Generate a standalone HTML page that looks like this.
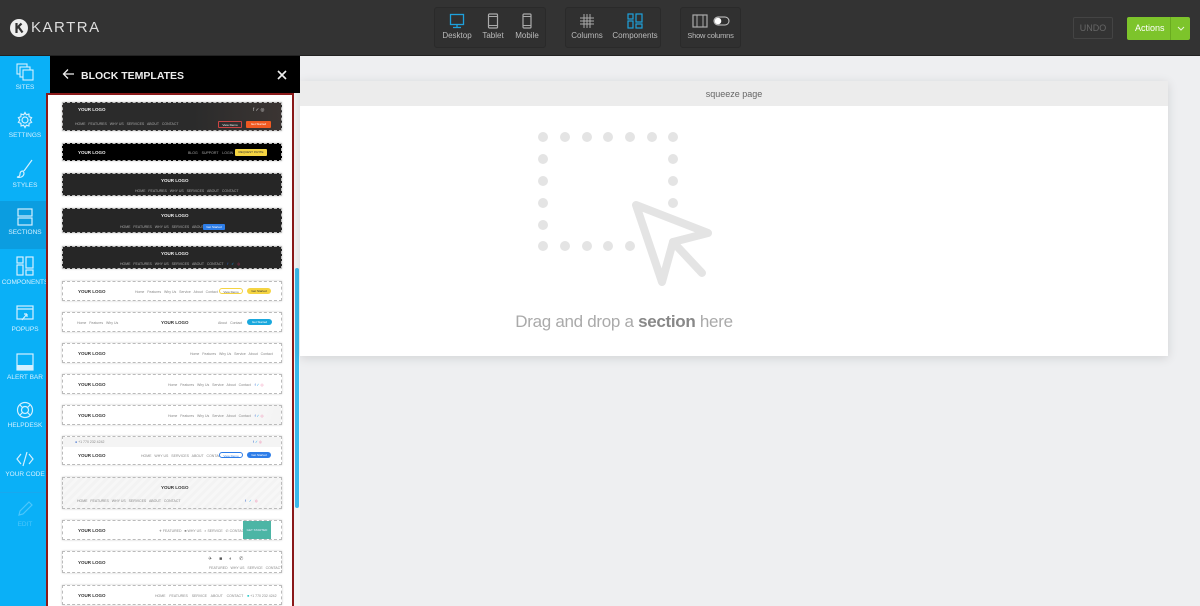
<!DOCTYPE html>
<html><head><meta charset="utf-8"><style>
*{box-sizing:border-box;margin:0;padding:0}
body{width:1200px;height:606px;overflow:hidden;background:#eeeff1;font-family:"Liberation Sans",sans-serif;position:relative}
.a{position:absolute}
#top{left:0;top:0;width:1200px;height:56px;background:#333;border-bottom:1px solid #222}
.grp{position:absolute;top:7px;height:41px;border:1px solid #2a2a2a;border-radius:3px;background:#303030}
.ti{position:absolute;top:0;font-size:8px;color:#bbb;text-align:center;white-space:nowrap}
.ti svg{display:block;margin:5px auto 2px}
#side{left:0;top:56px;width:50px;height:550px;background:#0ab0f7}
.si{position:absolute;left:0;width:50px;height:48px;text-align:center;color:#d4f0ff;font-size:6.5px}
.si svg{display:block;margin:7px auto 3px}
#ph{left:50px;top:56px;width:250px;height:37px;background:#000;color:#eee;font-size:10.5px;font-weight:bold}
#list{left:46px;top:93px;width:248px;height:513px;background:#fff;border:2px solid #8b1a1a;border-bottom:none;overflow:hidden}
.t{position:absolute;left:14px;width:220px;border:1px dashed #bbb;font-size:3.5px;color:#888;box-shadow:0 0 2px #ccc}
.t b{position:absolute;font-size:4.5px;font-weight:bold}
.t i{position:absolute;font-style:normal;white-space:nowrap}
.d{background:#262626;color:#aaa}.d b{color:#eee}
.w{background:#fff}.w b{color:#333}
.btn{position:absolute;height:6px;border-radius:3px;font-size:3px;line-height:6px;text-align:center;color:#fff}
</style></head><body>
<div id="top" class="a">
 <svg class="a" style="left:10px;top:19px" width="18" height="18" viewBox="0 0 18 18"><circle cx="9" cy="9" r="9" fill="#eee"/><path d="M6.5 4v10M6.5 9.5L11.5 4.5M8.5 8l4 5.5" stroke="#333" stroke-width="2.2" fill="none"/></svg>
 <div class="a" style="left:31px;top:19px;color:#ddd;font-size:15px;letter-spacing:1.5px">KARTRA</div>
 <div class="grp" style="left:434px;width:112px">
  <div class="ti" style="left:6px;width:32px;color:#bbb"><svg width="16" height="16" viewBox="0 0 16 16"><rect x="1.5" y="1.5" width="13" height="10" fill="none" stroke="#1ea1dc" stroke-width="1.3"/><path d="M8 11.5v3M4 14.5h8" stroke="#1ea1dc" stroke-width="1.3"/></svg>Desktop</div>
  <div class="ti" style="left:44px;width:28px"><svg width="12" height="16" viewBox="0 0 12 16"><rect x="1.5" y="1" width="9" height="14" rx="1" fill="none" stroke="#aaa" stroke-width="1.2"/><path d="M1.5 3.5h9M1.5 12.5h9" stroke="#aaa"/></svg>Tablet</div>
  <div class="ti" style="left:78px;width:28px"><svg width="12" height="16" viewBox="0 0 12 16"><rect x="2" y="1" width="8" height="14" rx="1" fill="none" stroke="#aaa" stroke-width="1.2"/><path d="M2 3.5h8M2 12.5h8" stroke="#aaa"/></svg>Mobile</div>
 </div>
 <div class="grp" style="left:565px;width:96px">
  <div class="ti" style="left:3px;width:36px"><svg width="16" height="16" viewBox="0 0 16 16"><path d="M5 1v14M8 1v14M11 1v14M1 5h14M1 8h14M1 11h14" stroke="#aaa"/></svg>Columns</div>
  <div class="ti" style="left:44px;width:50px"><svg width="16" height="16" viewBox="0 0 16 16" fill="none" stroke="#1ea1dc" stroke-width="1.2"><rect x="1" y="1" width="5" height="5"/><rect x="1" y="8" width="5" height="7"/><rect x="9" y="1" width="6" height="8"/><rect x="9" y="11" width="6" height="4"/></svg>Components</div>
 </div>
 <div class="grp" style="left:680px;width:61px">
  <div class="ti" style="left:0;width:59px;font-size:7.5px;letter-spacing:-0.2px"><svg width="40" height="16" viewBox="0 0 40 16"><rect x="2" y="2" width="14" height="12" fill="none" stroke="#aaa" stroke-width="1.2"/><path d="M6 2v12M12 2v12" stroke="#aaa"/><rect x="23" y="4" width="15" height="8" rx="4" fill="none" stroke="#ccc"/><circle cx="27" cy="8" r="3.3" fill="#fff"/></svg>Show columns</div>
 </div>
 <div class="a" style="left:1073px;top:17px;width:40px;height:22px;border:1px solid #444;border-radius:2px;color:#666;font-size:9px;line-height:20px;text-align:center">UNDO</div>
 <div class="a" style="left:1127px;top:17px;width:63px;height:23px;background:#7dc42b;border-radius:2px;color:#fff;font-size:9px;line-height:23px;padding-left:8px">Actions<span class="a" style="left:43px;top:0;width:20px;height:23px;border-left:1px solid #6aab20"><svg class="a" style="left:6px;top:9px" width="8" height="5" viewBox="0 0 8 5"><path d="M1 1l3 3 3-3" fill="none" stroke="#e8f5d8" stroke-width="1"/></svg></span></div>
</div>

<div id="side" class="a">
 <div class="si" style="top:0"><svg width="18" height="18" viewBox="0 0 18 18" fill="none" stroke="#d4f0ff" stroke-width="1.1"><rect x="1" y="1" width="10" height="10"/><rect x="4" y="4" width="10" height="10" fill="#0ab0f7"/><rect x="7" y="7" width="10" height="10" fill="#0ab0f7"/></svg>SITES</div>
 <div class="si" style="top:48px"><svg width="18" height="18" viewBox="0 0 18 18" fill="none" stroke="#d4f0ff" stroke-width="1.2"><circle cx="9" cy="9" r="3"/><path d="M9 1.5l1.3 2.3 2.6-.8.2 2.7 2.5 1-1.4 2.3 1.4 2.3-2.5 1-.2 2.7-2.6-.8L9 16.5l-1.3-2.3-2.6.8-.2-2.7-2.5-1L3.8 9 2.4 6.7l2.5-1 .2-2.7 2.6.8z"/></svg>SETTINGS</div>
 <div class="si" style="top:96px"><svg width="18" height="20" viewBox="0 0 18 20" fill="none" stroke="#d4f0ff" stroke-width="1.2"><path d="M16 1L8 12M7 12c-2 0-3 1-3 3s-1 3-3 3c3 1 7 0 7-4z"/></svg>STYLES</div>
 <div class="si" style="top:145px;background:#0b9de0"><svg width="18" height="18" viewBox="0 0 18 18" fill="none" stroke="#d4f0ff" stroke-width="1.2"><rect x="2" y="1" width="14" height="7"/><rect x="2" y="10" width="14" height="7"/></svg>SECTIONS</div>
 <div class="si" style="top:193px"><svg width="18" height="20" viewBox="0 0 18 20" fill="none" stroke="#d4f0ff" stroke-width="1.2"><rect x="1" y="1" width="6" height="6"/><rect x="1" y="9" width="6" height="10"/><rect x="10" y="1" width="7" height="11"/><rect x="10" y="14" width="7" height="5"/></svg>COMPONENTS</div>
 <div class="si" style="top:242px"><svg width="18" height="18" viewBox="0 0 18 18" fill="none" stroke="#d4f0ff" stroke-width="1.2"><rect x="1" y="1" width="16" height="13"/><path d="M1 4h16M6 15l5-6M11 9v3M11 9H8"/></svg>POPUPS</div>
 <div class="si" style="top:290px"><svg width="18" height="18" viewBox="0 0 18 18"><rect x="1" y="1" width="16" height="16" fill="none" stroke="#d4f0ff" stroke-width="1.2"/><rect x="1" y="12" width="16" height="5" fill="#d4f0ff"/></svg>ALERT BAR</div>
 <div class="si" style="top:338px"><svg width="18" height="18" viewBox="0 0 18 18" fill="none" stroke="#d4f0ff" stroke-width="1.2"><circle cx="9" cy="9" r="7.5"/><circle cx="9" cy="9" r="3.5"/><path d="M4 4l2.5 2.5M14 4l-2.5 2.5M4 14l2.5-2.5M14 14l-2.5-2.5"/></svg>HELPDESK</div>
 <div class="si" style="top:387px"><svg width="18" height="18" viewBox="0 0 18 18" fill="none" stroke="#d4f0ff" stroke-width="1.2"><path d="M5 4L1 9l4 5M13 4l4 5-4 5M11 2L7 16"/></svg>YOUR CODE</div>
 <div class="si" style="top:436px;color:#4cc6fb;border-top:1px solid #19a8ee"><svg width="18" height="18" viewBox="0 0 18 18" fill="none" stroke="#4cc6fb" stroke-width="1.2"><path d="M13 2l3 3-9 9-4 1 1-4z"/></svg>EDIT</div>
</div>

<div id="ph" class="a">
 <svg class="a" style="left:12px;top:12px" width="13" height="12" viewBox="0 0 13 12" fill="none" stroke="#eee" stroke-width="1.3"><path d="M12 6H1.5M6 1.5L1.5 6 6 10.5"/></svg>
 <div class="a" style="left:31px;top:14px">BLOCK TEMPLATES</div>
 <svg class="a" style="left:227px;top:14px" width="10" height="10" viewBox="0 0 10 10" stroke="#eee" stroke-width="1.6"><path d="M1 1l8 8M9 1L1 9"/></svg>
</div>

<div id="list" class="a">
 <div class="t d" style="top:7px;height:29px;background:linear-gradient(90deg,#2b2b2b 60%,#3b3533)"><b style="left:15px;top:4px">YOUR LOGO</b><i style="left:190px;top:4px;color:#ddd;font-size:4.5px">f ✓ ◎</i><i style="left:12px;top:19px">HOME &nbsp; FEATURES &nbsp; WHY US &nbsp; SERVICES &nbsp; ABOUT &nbsp; CONTACT</i><span class="btn" style="left:155px;top:18px;width:24px;border:1px solid #c44;border-radius:1px;height:7px">View Demo</span><span class="btn" style="left:183px;top:18px;width:25px;background:#f05a22;border-radius:1px;height:7px">Get Started</span></div>
 <div class="t d" style="top:48px;height:18px;background:#000"><b style="left:15px;top:6px">YOUR LOGO</b><i style="left:125px;top:7px">BLOG &nbsp;&nbsp; SUPPORT &nbsp;&nbsp; LOGIN</i><span class="btn" style="left:172px;top:5px;width:32px;background:#f5d442;color:#333;border-radius:1px;height:7px">REQUEST INVITE</span></div>
 <div class="t d" style="top:78px;height:23px"><b style="left:98px;top:4px">YOUR LOGO</b><i style="left:72px;top:15px">HOME &nbsp; FEATURES &nbsp; WHY US &nbsp; SERVICES &nbsp; ABOUT &nbsp; CONTACT</i></div>
 <div class="t d" style="top:113px;height:25px"><b style="left:98px;top:4px">YOUR LOGO</b><i style="left:57px;top:16px">HOME &nbsp; FEATURES &nbsp; WHY US &nbsp; SERVICES &nbsp; ABOUT &nbsp; CONTACT</i><span class="btn" style="left:140px;top:15px;width:22px;background:#2d7de8;border-radius:1px">Get Started</span></div>
 <div class="t d" style="top:151px;height:23px"><b style="left:98px;top:4px">YOUR LOGO</b><i style="left:57px;top:15px">HOME &nbsp; FEATURES &nbsp; WHY US &nbsp; SERVICES &nbsp; ABOUT &nbsp; CONTACT &nbsp;&nbsp; <span style="color:#36c">f</span> &nbsp; <span style="color:#2ae">✓</span> &nbsp; <span style="color:#c36">◎</span></i></div>
 <div class="t w" style="top:186px;height:20px"><b style="left:15px;top:7px">YOUR LOGO</b><i style="left:72px;top:8px">Home &nbsp; Features &nbsp; Why Us &nbsp; Service &nbsp; About &nbsp; Contact</i><span class="btn" style="left:156px;top:6px;width:24px;border:1px solid #f5d442;color:#555">View Demo</span><span class="btn" style="left:184px;top:6px;width:24px;background:#f5d442;color:#333">Get Started</span></div>
 <div class="t w" style="top:217px;height:20px"><i style="left:14px;top:8px">Home &nbsp; Features &nbsp; Why Us</i><b style="left:98px;top:7px">YOUR LOGO</b><i style="left:155px;top:8px">About &nbsp; Contact</i><span class="btn" style="left:184px;top:6px;width:25px;background:#1aa8dd">Get Started</span></div>
 <div class="t w" style="top:248px;height:20px"><b style="left:15px;top:7px">YOUR LOGO</b><i style="left:127px;top:8px">Home &nbsp; Features &nbsp; Why Us &nbsp; Service &nbsp; About &nbsp; Contact</i></div>
 <div class="t w" style="top:279px;height:20px"><b style="left:15px;top:7px">YOUR LOGO</b><i style="left:105px;top:8px">Home &nbsp; Features &nbsp; Why Us &nbsp; Service &nbsp; About &nbsp; Contact &nbsp;&nbsp; <span style="color:#36c">f</span> <span style="color:#2ae">✓</span> <span style="color:#e69">◎</span></i></div>
 <div class="t w" style="top:310px;height:20px;background:linear-gradient(110deg,#fff 60%,#f3f3f3)"><b style="left:15px;top:7px">YOUR LOGO</b><i style="left:105px;top:8px">Home &nbsp; Features &nbsp; Why Us &nbsp; Service &nbsp; About &nbsp; Contact &nbsp;&nbsp; <span style="color:#36c">f</span> <span style="color:#2ae">✓</span> <span style="color:#e69">◎</span></i></div>
 <div class="t w" style="top:341px;height:29px"><div class="a" style="left:0;top:0;width:218px;height:10px;background:#f4f4f4"></div><i style="left:12px;top:3px"><span style="color:#36c">●</span> +1 770 232 4242</i><i style="left:190px;top:3px"><span style="color:#36c">f</span> <span style="color:#2ae">✓</span> <span style="color:#e69">◎</span></i><b style="left:15px;top:16px">YOUR LOGO</b><i style="left:78px;top:17px">HOME &nbsp; WHY US &nbsp; SERVICES &nbsp; ABOUT &nbsp; CONTACT</i><span class="btn" style="left:156px;top:15px;width:24px;border:1px solid #2d7de8;color:#2d7de8;background:#fff">View Demo</span><span class="btn" style="left:184px;top:15px;width:24px;background:#2d7de8">Get Started</span></div>
 <div class="t w" style="top:382px;height:32px;background:repeating-linear-gradient(135deg,#f3f3f3 0 3px,#f7f7f7 3px 6px)"><b style="left:98px;top:7px">YOUR LOGO</b><i style="left:14px;top:21px">HOME &nbsp; FEATURES &nbsp; WHY US &nbsp; SERVICES &nbsp; ABOUT &nbsp; CONTACT</i><i style="left:182px;top:21px"><span style="color:#36c">f</span> &nbsp; <span style="color:#2ae">✓</span> &nbsp; <span style="color:#e69">◎</span></i></div>
 <div class="t w" style="top:425px;height:20px"><b style="left:15px;top:7px">YOUR LOGO</b><i style="left:96px;top:8px">✈ FEATURED &nbsp; ■ WHY US &nbsp; ◐ SERVICE &nbsp; ✆ CONTACT</i><div class="a" style="left:180px;top:0;width:28px;height:18px;background:#4cb5a5;color:#eef;font-size:3px;line-height:18px;text-align:center">GET STARTED</div></div>
 <div class="t w" style="top:456px;height:22px"><b style="left:15px;top:8px">YOUR LOGO</b><i style="left:145px;top:4px;font-size:5px;color:#555">✈ &nbsp;&nbsp;&nbsp; ■ &nbsp;&nbsp;&nbsp; ◐ &nbsp;&nbsp;&nbsp; ✆</i><i style="left:146px;top:14px">FEATURED &nbsp; WHY US &nbsp; SERVICE &nbsp; CONTACT</i></div>
 <div class="t w" style="top:490px;height:20px"><b style="left:15px;top:7px">YOUR LOGO</b><i style="left:92px;top:8px">HOME &nbsp;&nbsp; FEATURES &nbsp;&nbsp; SERVICE &nbsp;&nbsp; ABOUT &nbsp;&nbsp; CONTACT &nbsp;&nbsp; <span style="color:#3cc">■</span> +1 770 232 4242</i></div>
</div>
<div class="a" style="left:294px;top:93px;width:6px;height:513px;background:#f4f4f4"></div>
<div class="a" style="left:295px;top:268px;width:4px;height:240px;background:#3bb8ea;border-radius:2px"></div>

<div class="a" style="left:300px;top:81px;width:868px;height:275px;background:#fff;box-shadow:0 2px 10px rgba(0,0,0,.12)">
 <div style="height:25px;background:#ececec;text-align:center;font-size:9px;line-height:27px;color:#666">squeeze page</div>
 <svg class="a" style="left:230px;top:40px" width="200" height="170" viewBox="0 0 200 170">
  <g fill="#e4e4e4">
   <circle cx="13" cy="16" r="5"/><circle cx="35" cy="16" r="5"/><circle cx="57" cy="16" r="5"/><circle cx="78" cy="16" r="5"/><circle cx="100" cy="16" r="5"/><circle cx="122" cy="16" r="5"/><circle cx="143" cy="16" r="5"/>
   <circle cx="13" cy="38" r="5"/><circle cx="13" cy="60" r="5"/><circle cx="13" cy="82" r="5"/><circle cx="13" cy="104" r="5"/>
   <circle cx="143" cy="38" r="5"/><circle cx="143" cy="60" r="5"/><circle cx="143" cy="82" r="5"/>
   <circle cx="13" cy="125" r="5"/><circle cx="35" cy="125" r="5"/><circle cx="57" cy="125" r="5"/><circle cx="78" cy="125" r="5"/><circle cx="100" cy="125" r="5"/>
  </g>
  <path d="M106 84L178 112L143 121L132 161Z" fill="none" stroke="#e4e4e4" stroke-width="8" stroke-linejoin="round" stroke-linecap="round"/>
  <path d="M143 121L172 152" fill="none" stroke="#e4e4e4" stroke-width="8" stroke-linecap="round"/>
 </svg>
 <div class="a" style="left:0;top:231px;width:648px;text-align:center;font-size:17px;color:#aaa;letter-spacing:-0.3px">Drag and drop a <b style="color:#888">section</b> here</div>
</div>
</body></html>
